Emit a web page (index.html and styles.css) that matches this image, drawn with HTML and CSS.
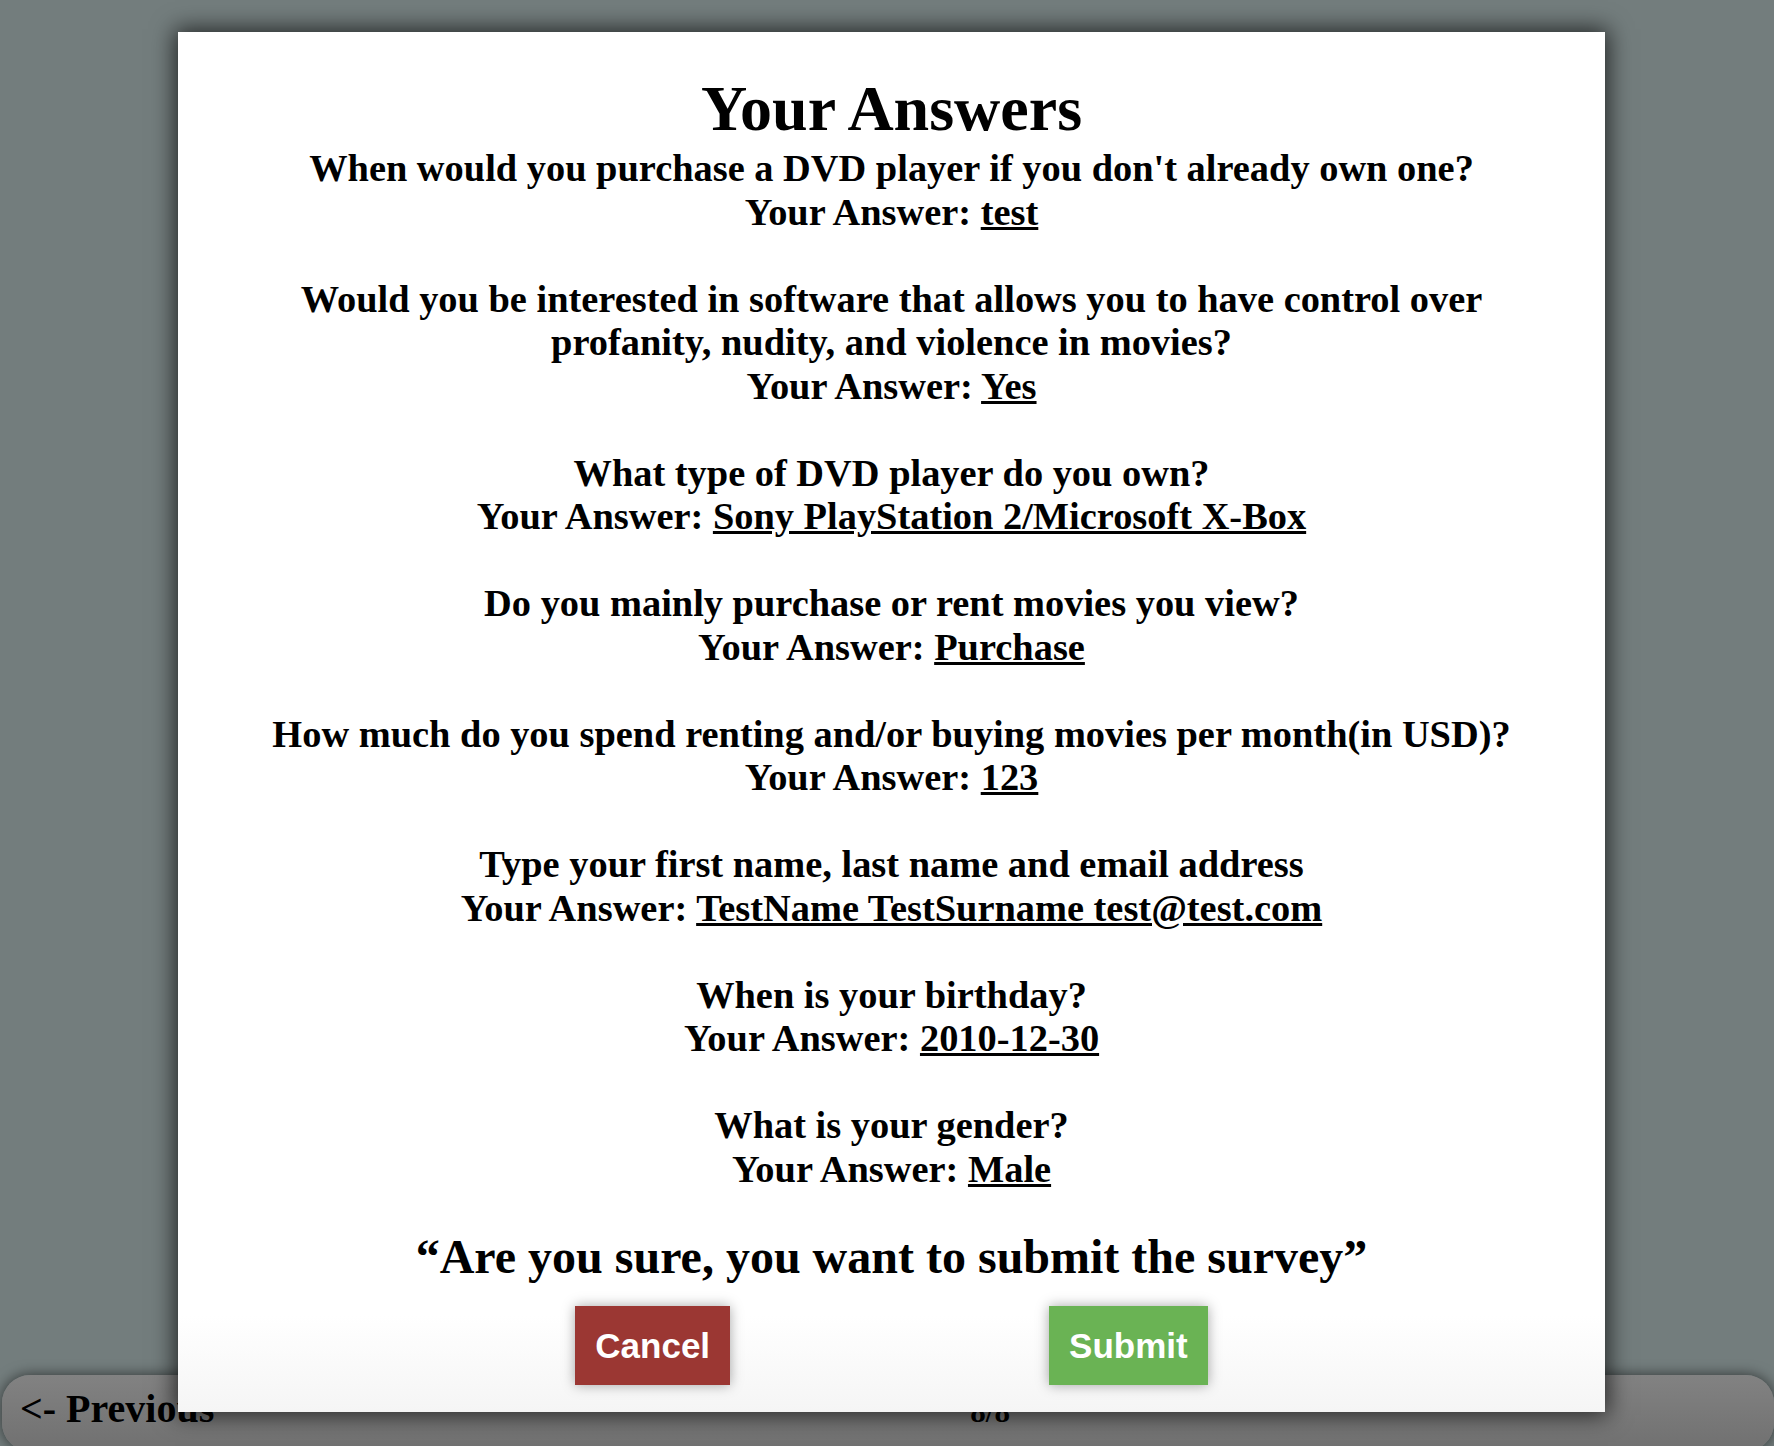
FILE: index.html
```html
<!DOCTYPE html>
<html lang="en">
<head>
<meta charset="utf-8">
<title>Your Answers</title>
<link rel="stylesheet" href="styles.css">
</head>
<body>
<div class="page">
  <footer class="navbar">
    <span class="nav-prev">&lt;- Previous</span>
    <span class="nav-count">8/8</span>
    <span class="nav-next"></span>
  </footer>
</div>

<div class="modal">
  <h1 class="modal-title">Your Answers</h1>
  <div class="answers">
    <p class="qa">When would you purchase a DVD player if you don't already own one?<br>Your Answer: <u>test</u></p>
    <p class="qa">Would you be interested in software that allows you to have control over profanity, nudity, and violence in movies?<br>Your Answer: <u>Yes</u></p>
    <p class="qa">What type of DVD player do you own?<br>Your Answer: <u>Sony PlayStation 2/Microsoft X-Box</u></p>
    <p class="qa">Do you mainly purchase or rent movies you view?<br>Your Answer: <u>Purchase</u></p>
    <p class="qa">How much do you spend renting and/or buying movies per month(in USD)?<br>Your Answer: <u>123</u></p>
    <p class="qa">Type your first name, last name and email address<br>Your Answer: <u>TestName TestSurname test@test.com</u></p>
    <p class="qa">When is your birthday?<br>Your Answer: <u>2010-12-30</u></p>
    <p class="qa">What is your gender?<br>Your Answer: <u>Male</u></p>
  </div>
  <p class="confirm">“Are you sure, you want to submit the survey”</p>
  <div class="actions">
    <button class="btn btn-cancel" type="button">Cancel</button>
    <button class="btn btn-submit" type="button">Submit</button>
  </div>
</div>
</body>
</html>
```

FILE: styles.css
```css
html, body {
  margin: 0;
  padding: 0;
}

body {
  height: 100vh;
  overflow: hidden;
  background: #737d7d;
  font-family: "Liberation Serif", "Times New Roman", serif;
  color: #000;
}

.page {
  height: 100vh;
  display: flex;
  flex-direction: column;
  justify-content: flex-end;
}

.navbar {
  height: 76px;
  margin: 0 0 -5px 2px;
  box-sizing: border-box;
  padding: 12px 8px 0 18px;
  display: flex;
  justify-content: space-between;
  align-items: baseline;
  border-radius: 28px;
  background: linear-gradient(#828282, #707070);
  box-shadow: 0 0 14px rgba(0, 0, 0, 0.6);
}

.nav-prev {
  font-size: 40px;
  line-height: 44px;
  font-weight: bold;
}

.nav-count {
  font-size: 31px;
  line-height: 44px;
  font-weight: bold;
}

.nav-next {
  width: 0;
}

.modal {
  position: absolute;
  top: 32px;
  left: 178px;
  width: 1427px;
  height: 1380px;
  box-sizing: border-box;
  padding: 43px 68px 0;
  background: linear-gradient(to bottom, #ffffff 93%, #f5f5f5 100%);
  box-shadow: 0 0 22px 3px rgba(0, 0, 0, 0.7);
  text-align: center;
  font-weight: bold;
}

.modal-title {
  margin: 0 0 4px;
  font-size: 64px;
  line-height: 68px;
  font-weight: bold;
}

.answers {
  font-size: 38.4px;
  line-height: 43.5px;
}

.qa {
  margin: 0 0 43.5px;
}

.qa:last-child {
  margin-bottom: 0;
}

.confirm {
  margin: 38px 0 0;
  font-size: 48px;
  line-height: 55px;
}

.actions {
  margin-top: 22px;
  display: flex;
  justify-content: center;
  gap: 319px;
}

.btn {
  border: none;
  margin: 0;
  padding: 20px 20px;
  font-family: "Liberation Sans", Arial, sans-serif;
  font-weight: bold;
  font-size: 35px;
  line-height: 39px;
  color: #fff;
  box-shadow: 0 0 12px rgba(0, 0, 0, 0.35);
  cursor: pointer;
}

.btn-cancel {
  background: #9b3733;
}

.btn-submit {
  background: #6ab354;
}
```
